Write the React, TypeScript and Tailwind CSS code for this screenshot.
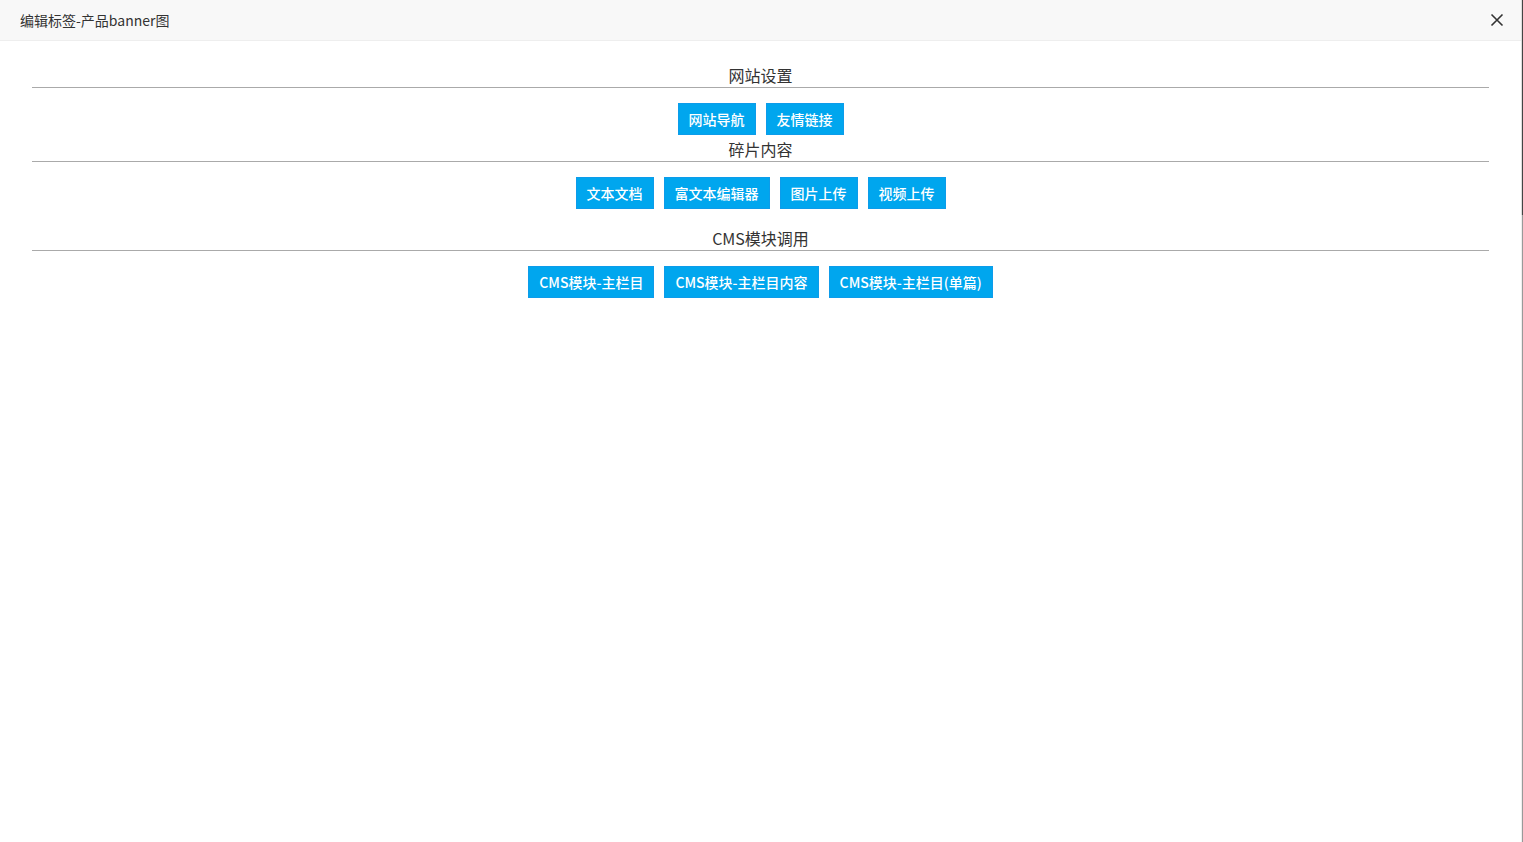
import React from "react";

const font = { fontFamily: '"Noto Sans CJK SC", "Noto Sans", sans-serif' };

function Btn({ children }: { children: React.ReactNode }) {
  return (
    <button className="h-[32px] px-[10px] border border-[#0d9cea] bg-[#00a6ee] text-white text-[14px] font-medium leading-[30px] whitespace-nowrap">
      {children}
    </button>
  );
}

function Section({ title, items, mb }: { title: string; items: string[]; mb: string }) {
  return (
    <div className={mb}>
      <div className="text-center text-[16px] leading-[24px] text-[#333]">{title}</div>
      <div className="h-px bg-[#aaa]" />
      <div className="flex justify-center gap-[10px] mt-[15px]">
        {items.map((t) => (
          <Btn key={t}>{t}</Btn>
        ))}
      </div>
    </div>
  );
}

export default function App() {
  return (
    <div style={font} className="flex w-[1523px] h-[842px] bg-white overflow-hidden">
      <div className="flex-1 flex flex-col">
        <div className="h-[41px] bg-[#f8f8f8] border-b border-[#eee] flex items-center justify-between pl-[20px] pr-[17px]">
          <span className="text-[14px] text-[#333]">编辑标签-产品banner图</span>
          <svg width="14" height="14" viewBox="0 0 14 14" className="text-[#333]">
            <path d="M1.5 1.5 L12.5 12.5 M12.5 1.5 L1.5 12.5" stroke="currentColor" strokeWidth="1.6" />
          </svg>
        </div>
        <div className="px-[32px] pt-[22px]">
          <Section title="网站设置" items={["网站导航", "友情链接"]} mb="mb-[2px]" />
          <Section title="碎片内容" items={["文本文档", "富文本编辑器", "图片上传", "视频上传"]} mb="mb-[17px]" />
          <Section title="CMS模块调用" items={["CMS模块-主栏目", "CMS模块-主栏目内容", "CMS模块-主栏目(单篇)"]} mb="" />
        </div>
      </div>
      <div className="w-[2px] flex flex-col">
        <div className="h-[215px] flex">
          <div className="w-px bg-[#ddd]" />
          <div className="w-px bg-[#444]" />
        </div>
        <div className="flex-1 flex">
          <div className="w-px bg-[#eee]" />
          <div className="w-px bg-[#999]" />
        </div>
      </div>
    </div>
  );
}
